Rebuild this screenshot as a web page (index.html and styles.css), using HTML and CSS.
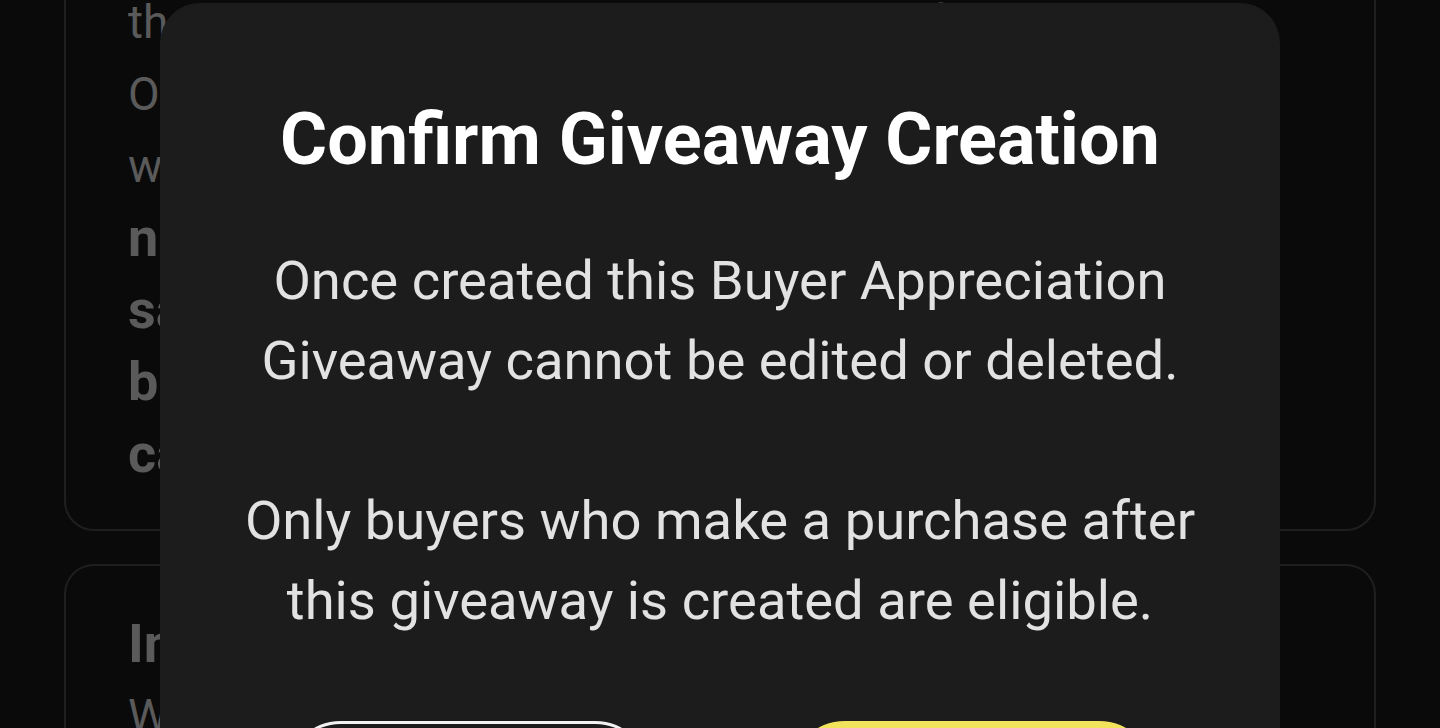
FILE: index.html
```html
<!DOCTYPE html>
<html lang="en">
<head>
<meta charset="utf-8">
<title>Confirm Giveaway Creation</title>
<link rel="stylesheet" href="styles.css">
</head>
<body>
<main class="page">
  <section class="card card-first">
    <p class="card-text">the giveaway will be chosen at random from all eligible</p>
    <p class="card-text">Once the giveaway has ended, the winner</p>
    <p class="card-text">will be notified automatically and</p>
    <p class="card-text strong">no further changes can be made to the</p>
    <p class="card-text strong">sale price, prizes or eligibility once the</p>
    <p class="card-text strong">buyer appreciation giveaway has been</p>
    <p class="card-text strong">can't be cancelled.</p>
  </section>
  <section class="card card-second">
    <h2 class="card-heading">Important</h2>
    <p class="card-text">Winners are selected after the show ends</p>
  </section>
</main>

<div class="modal" role="dialog" aria-labelledby="modal-title">
  <h1 class="modal-title" id="modal-title">Confirm Giveaway Creation</h1>
  <p class="modal-text">Once created this Buyer Appreciation<br>Giveaway cannot be edited or deleted.</p>
  <p class="modal-text">Only buyers who make a purchase after<br>this giveaway is created are eligible.</p>
  <div class="modal-actions">
    <button class="btn btn-outline">Cancel</button>
    <button class="btn btn-primary">Create</button>
  </div>
</div>
</body>
</html>
```

FILE: styles.css
```css
html, body {
  margin: 0;
  padding: 0;
  height: 100%;
  overflow: hidden;
}

body {
  background: #0a0a0a;
  font-family: Roboto, "Noto Sans", sans-serif;
}

.page {
  display: flex;
  flex-direction: column;
  gap: 33px;
  padding: 0 64px;
  margin-top: -56px;
}

.card {
  border: 2px solid #1f1f1f;
  border-radius: 30px;
  padding: 40px 62px 39px;
}

.card-text {
  margin: 0;
  color: #5a5a5a;
  font-size: 46px;
  line-height: 72px;
  white-space: nowrap;
  overflow: hidden;
}

.card-text.strong {
  font-size: 54px;
  font-weight: 700;
}

.card-heading {
  margin: 0;
  color: #5a5a5a;
  font-size: 54px;
  font-weight: 700;
  line-height: 72px;
}

.card-second {
  padding-top: 42px;
  min-height: 400px;
}

.modal {
  position: absolute;
  left: 160px;
  top: 3px;
  width: 1120px;
  height: 900px;
  box-sizing: border-box;
  background: #1c1c1c;
  border-radius: 40px;
  padding: 92px 40px 0;
  text-align: center;
}

.modal-title {
  margin: 0 0 56px;
  color: #ffffff;
  font-size: 72px;
  font-weight: 700;
  line-height: 90px;
  white-space: nowrap;
}

.modal-text {
  margin: 0 0 80px;
  color: #e2e2e2;
  font-size: 54.4px;
  font-weight: 400;
  line-height: 80px;
  white-space: nowrap;
}

.modal-actions {
  display: flex;
  justify-content: center;
  gap: 140px;
  margin-top: 18px;
}

.btn {
  flex: none;
  width: 364px;
  height: 110px;
  border-radius: 56px;
  font-family: inherit;
  font-size: 46px;
  font-weight: 700;
}

.btn-outline {
  background: transparent;
  border: 3px solid #f2f2f2;
  color: #f2f2f2;
}

.btn-primary {
  background: #f2e35c;
  border: 3px solid #f2e35c;
  color: #111111;
}
```
